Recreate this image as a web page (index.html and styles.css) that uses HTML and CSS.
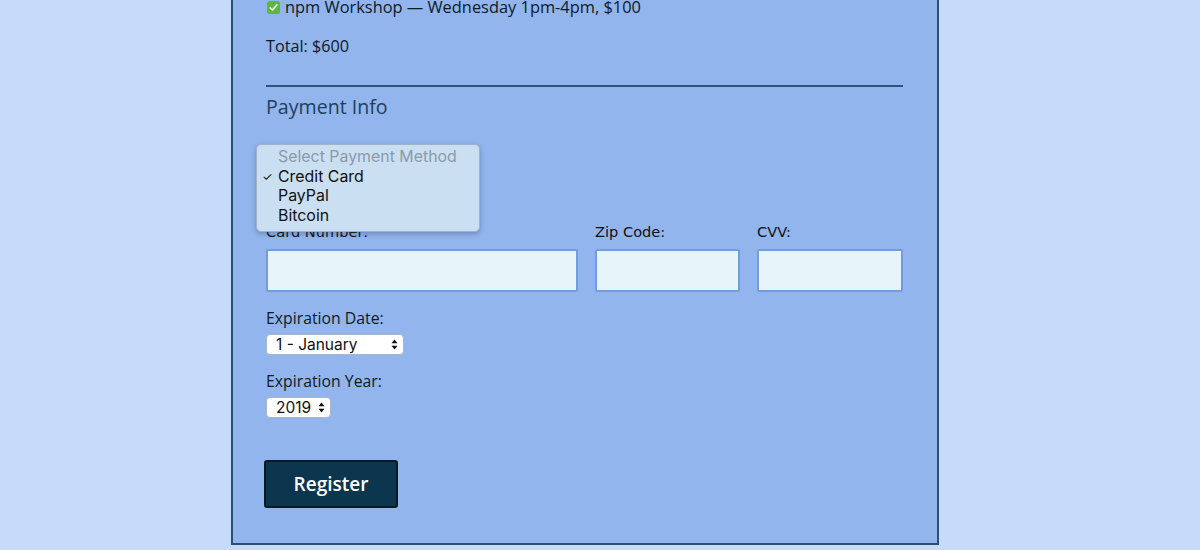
FILE: index.html
```html
<!DOCTYPE html>
<html>
<head>
<meta charset="utf-8">
<link rel="stylesheet" href="styles.css">
</head>
<body>
<div class="page">
  <form class="card">
    <div class="activity">
      <span class="check"><svg width="13" height="13" viewBox="0 0 13 13"><rect x="0" y="0" width="13" height="13" rx="2.5" fill="#5cb93a"/><path d="M3.2 6.8 L5.5 9 L9.8 3.9" fill="none" stroke="#fff" stroke-width="1.6" stroke-linecap="round" stroke-linejoin="round"/></svg></span>
      <span>npm Workshop — Wednesday 1pm-4pm, $100</span>
    </div>
    <p class="total">Total: $600</p>
    <hr class="rule">
    <h2 class="legend">Payment Info</h2>
    <div class="pay-wrap">
      <div class="sys-label">I'm going to pay with:</div>
      <div class="fake-select pay-select"><span>Credit Card</span></div>
      <ul class="popup">
        <li class="disabled">Select Payment Method</li>
        <li class="selected"><span class="tick">✓</span>Credit Card</li>
        <li>PayPal</li>
        <li>Bitcoin</li>
      </ul>
    </div>
    <div class="cc-grid">
      <div class="field">
        <label class="sys-label">Card Number:</label>
        <input class="text-input" type="text">
      </div>
      <div class="field">
        <label class="sys-label">Zip Code:</label>
        <input class="text-input" type="text">
      </div>
      <div class="field">
        <label class="sys-label">CVV:</label>
        <input class="text-input" type="text">
      </div>
    </div>
    <div class="exp">
      <div class="exp-label">Expiration Date:</div>
      <div class="fake-select month"><span>1 - January</span><svg class="arrows" width="7" height="11" viewBox="0 0 7 11"><path d="M3.5 0.5 L6.5 4.3 L0.5 4.3 Z M3.5 10.5 L6.5 6.7 L0.5 6.7 Z" fill="#111"/></svg></div>
    </div>
    <div class="exp">
      <div class="exp-label">Expiration Year:</div>
      <div class="fake-select year"><span>2019</span><svg class="arrows" width="7" height="11" viewBox="0 0 7 11"><path d="M3.5 0.5 L6.5 4.3 L0.5 4.3 Z M3.5 10.5 L6.5 6.7 L0.5 6.7 Z" fill="#111"/></svg></div>
    </div>
    <button class="register" type="button">Register</button>
  </form>
</div>
</body>
</html>
```
FILE: styles.css
```css
html, body {
  margin: 0;
  padding: 0;
  background: #c6dbf9;
  height: 550px;
  overflow: hidden;
}
.page {
  display: flex;
  justify-content: center;
  padding-right: 30px;
}
.card {
  width: 637px;
  box-sizing: content-box;
  margin: 0;
  padding: 0 34px 0 33px;
  background: #91b5ec;
  border: 2px solid #2c4f73;
  border-top: none;
  height: 543px;
  font-family: "Open Sans", "Lato", sans-serif;
  color: #0e1a26;
}
.activity {
  display: flex;
  align-items: center;
  gap: 5px;
  font-size: 16.4px;
  line-height: 14px;
  padding-left: 1px;
  margin-top: 0;
}
.check {
  display: flex;
  width: 13px;
  height: 13px;
}
.total {
  margin: 23px 0 0 0;
  font-size: 16.2px;
  line-height: 18px;
}
.rule {
  margin: 30px 0 0 0;
  border: none;
  border-top: 2px solid #2f5478;
  height: 0;
}
.legend {
  margin: 8px 0 0 0;
  font-size: 19.6px;
  line-height: 24px;
  font-weight: normal;
  color: #1f3f5c;
}
.pay-wrap {
  position: relative;
  margin-top: 27px;
  height: 78px;
}
.sys-label {
  display: block;
  font-family: "DejaVu Sans", "Liberation Sans", sans-serif;
  font-size: 14.6px;
  line-height: 16px;
  color: #111;
}
.pay-select {
  margin-top: 6px;
  width: 170px;
}
.popup {
  position: absolute;
  left: -10px;
  top: -2px;
  width: 224px;
  height: 88px;
  box-sizing: border-box;
  margin: 0;
  padding: 2px 0 0 0;
  list-style: none;
  background: #cadff2;
  border: 1px solid #9fb4ca;
  border-radius: 5px;
  box-shadow: 0 2px 5px rgba(40, 60, 90, 0.35);
  font-family: "Inter", "Liberation Sans", sans-serif;
  font-size: 15.9px;
  line-height: 19.7px;
  color: #111;
}
.popup li {
  padding-left: 21px;
  position: relative;
}
.popup .disabled {
  color: #8a9aa9;
}
.popup .tick {
  position: absolute;
  left: 5px;
  font-size: 12px;
}
.cc-grid {
  display: grid;
  grid-template-columns: 312px 145px 146px;
  column-gap: 17px;
}
.field .sys-label {
  margin-bottom: 9px;
}
.text-input {
  display: block;
  width: 100%;
  height: 43px;
  box-sizing: border-box;
  background: #e7f4fa;
  border: 2px solid #6f9de0;
  border-radius: 2px;
  margin: 0;
  padding: 0 8px;
}
.exp {
  margin-top: 17px;
}
.exp-label {
  font-size: 15.8px;
  line-height: 18px;
}
.fake-select {
  display: flex;
  align-items: center;
  justify-content: space-between;
  box-sizing: border-box;
  height: 21px;
  background: #fff;
  border: 1px solid #a9b6c6;
  border-radius: 4px;
  padding: 0 5px 0 9px;
  font-family: "Inter", "Liberation Sans", sans-serif;
  font-size: 15.5px;
  color: #111;
}
.exp .fake-select {
  margin-top: 7px;
}
.month {
  width: 138px;
}
.year {
  width: 65px;
  padding-left: 9px;
}
.register {
  display: block;
  margin: 42px 0 0 -2px;
  width: 134px;
  height: 48px;
  background: #0c354e;
  border: 2px solid #061a26;
  border-radius: 3px;
  color: #fff;
  font-family: "Open Sans", "Lato", sans-serif;
  font-size: 19px;
  font-weight: 600;
  padding: 0;
}
```
